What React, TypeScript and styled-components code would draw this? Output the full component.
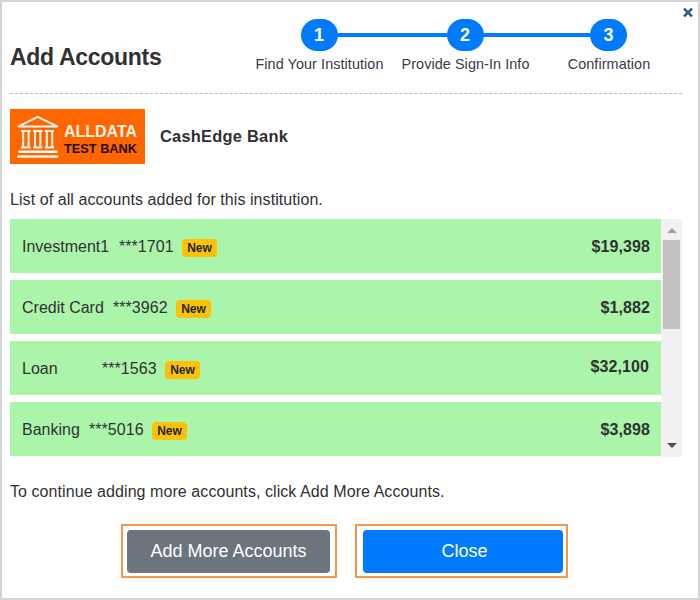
import React from 'react';
import styled, { createGlobalStyle } from 'styled-components';

const GlobalStyle = createGlobalStyle`
  *, *::before, *::after { box-sizing: border-box; }
  body {
    margin: 0;
    background: #fff;
    color: #313131;
    font-family: "Liberation Sans", Arial, sans-serif;
    font-size: 16px;
  }
  p, h1, h2, ul { margin: 0; padding: 0; font-size: inherit; }
`;

const Dialog = styled.main`
  position: relative;
  width: 700px;
  height: 600px;
  padding: 0 16px 0 8px;
  border: 2px solid #d6d6d6;
  background: #fff;
  overflow: hidden;
`;

const Dismiss = styled.button`
  position: absolute;
  top: 6px;
  right: 5px;
  width: 10px;
  height: 9px;
  padding: 0;
  border: 0;
  background: none;
  svg { display: block; }
`;

const Header = styled.header`
  display: flex;
  height: 92px;
  border-bottom: 1px dashed #b9b9b9;
`;

const Title = styled.h1`
  flex: none;
  width: 236px;
  padding-top: 41px;
  line-height: 28px;
  && { font-size: 23px; }
  letter-spacing: -0.3px;
  white-space: nowrap;
`;

const Steps = styled.ol`
  display: grid;
  grid-template-columns: 146px 146px 141px;
  margin: 17px 0 0;
  padding: 0;
  list-style: none;
`;

const Step = styled.li`
  display: flex;
  flex-direction: column;
  align-items: center;
`;

const Track = styled.div<{ $left: boolean; $right: boolean }>`
  display: grid;
  grid-template-columns: 1fr 37px 1fr;
  align-items: center;
  width: 100%;
  &::before, &::after { content: ""; height: 4px; }
  &::before { background: ${(p) => (p.$left ? '#007bff' : 'transparent')}; }
  &::after { background: ${(p) => (p.$right ? '#007bff' : 'transparent')}; }
`;

const StepNumber = styled.span`
  height: 32px;
  border-radius: 16px;
  background: #007bff;
  color: #fff;
  font-size: 18px;
  font-weight: 700;
  line-height: 32px;
  text-align: center;
`;

const StepLabel = styled.span`
  margin-top: 4px;
  padding-left: 1px;
  color: #343c49;
  font-size: 14.4px;
  line-height: 18px;
  letter-spacing: 0.08px;
  white-space: nowrap;
`;

const Institution = styled.section`
  display: flex;
  align-items: center;
  gap: 15px;
  margin-top: 15px;
  height: 55px;
`;

const Logo = styled.svg`
  display: block;
  flex: none;
`;

const LogoText = styled.text`
  font-family: "Liberation Sans", Arial, sans-serif;
  font-weight: 700;
`;

const InstitutionName = styled.h2`
  && { font-size: 16.4px; padding-bottom: 2px; }
  letter-spacing: 0.25px;
  line-height: 20px;
`;

const Note = styled.p<{ $top: number }>`
  margin-top: ${(p) => p.$top}px;
  line-height: 20px;
  letter-spacing: 0.07px;
`;

const Accounts = styled.section`
  display: grid;
  grid-template-columns: 651px 21px;
  height: 238px;
  margin-top: 9px;
`;

const Rows = styled.ul`
  display: flex;
  flex-direction: column;
  gap: 7px;
  list-style: none;
`;

const Row = styled.li`
  display: flex;
  align-items: center;
  height: 54px;
  padding: 2px 11px 0 12px;
  background: #abf5ab;
`;

const AccountName = styled.span<{ $width: number }>`
  width: ${(p) => p.$width}px;
`;

const AccountNumber = styled.span`
  width: 63px;
  letter-spacing: 0.05px;
`;

const Badge = styled.span`
  width: 35px;
  height: 18px;
  margin-top: 2px;
  border-radius: 4px;
  background: #ffc107;
  color: #212529;
  font-size: 12px;
  font-weight: 700;
  line-height: 18px;
  text-align: center;
`;

const Amount = styled.span<{ $raised?: boolean }>`
  margin: ${(p) => (p.$raised ? '-4px 1px 0 auto' : '0 0 0 auto')};
  font-weight: 700;
  letter-spacing: 0.1px;
`;

const Scrollbar = styled.div`
  display: flex;
  flex-direction: column;
  align-items: center;
  background: #f1f1f1;
`;

const Arrow = styled.span<{ $down?: boolean }>`
  width: 0;
  height: 0;
  margin-top: ${(p) => (p.$down ? 'auto' : '9px')};
  margin-bottom: ${(p) => (p.$down ? '9px' : '7px')};
  border: 5px solid transparent;
  border-top: ${(p) => (p.$down ? '5px solid #505050' : '0')};
  border-bottom: ${(p) => (p.$down ? '0' : '5px solid #a3a3a3')};
`;

const Thumb = styled.span`
  width: 17px;
  height: 89px;
  background: #c1c1c1;
`;

const Actions = styled.footer`
  display: flex;
  gap: 18px;
  margin: 22px 0 0 111px;
`;

const Highlight = styled.div<{ $width: number; $left: number }>`
  width: ${(p) => p.$width}px;
  height: 54px;
  padding: 4px 5px 3px ${(p) => p.$left}px;
  border: 2px solid #f79646;
`;

const Button = styled.button<{ $primary?: boolean }>`
  display: block;
  width: ${(p) => (p.$primary ? 200 : 203)}px;
  height: 43px;
  padding: 0;
  border: 0;
  border-radius: 4px;
  background: ${(p) => (p.$primary ? '#007bff' : '#6c757d')};
  color: #fff;
  font: 18px "Liberation Sans", Arial, sans-serif;
  white-space: nowrap;
  ${(p) => (p.$primary ? 'padding-left: 3px;' : '')}
`;

const steps = ['Find Your Institution', 'Provide Sign-In Info', 'Confirmation'];

const accounts = [
  { name: 'Investment1', number: '***1701', amount: '$19,398', width: 97 },
  { name: 'Credit Card', number: '***3962', amount: '$1,882', width: 91 },
  { name: 'Loan', number: '***1563', amount: '$32,100', width: 80, raised: true },
  { name: 'Banking', number: '***5016', amount: '$3,898', width: 67 },
];

function BankLogo() {
  return (
    <Logo width="135" height="55" viewBox="0 0 135 55" role="img" aria-label="AllData Test Bank">
      <rect width="135" height="55" fill="#ff6600" />
      <g fill="none" stroke="#fff8f2" strokeWidth="2">
        <path d="M8.5 17.4 27.8 7.8 47.2 17.4Z" strokeLinejoin="round" />
        <path d="M11 22H20.6M23 22H32.4M34.8 22H44M11 38.6H20.6M23 38.6H32.4M34.8 38.6H44" />
        <path d="M13.2 21V39M18.6 21V39M25 21V39M30.4 21V39M36.8 21V39M42.2 21V39" />
        <path d="M9.5 42.8H46.5M8.3 47.4H47.3" strokeWidth="2.5" strokeLinecap="round" />
      </g>
      <LogoText x="54" y="28.2" fontSize="16" textLength="73" lengthAdjust="spacingAndGlyphs" fill="#fff3ea">
        ALLDATA
      </LogoText>
      <LogoText x="54" y="44.2" fontSize="13.5" textLength="73" lengthAdjust="spacingAndGlyphs" fill="#1f0d00">
        TEST BANK
      </LogoText>
    </Logo>
  );
}

export default function App() {
  return (
    <>
      <GlobalStyle />
      <Dialog>
        <Dismiss aria-label="Close dialog">
          <svg width="10" height="9" viewBox="0 0 10 9">
            <path d="M1 .6 9 8.4M9 .6 1 8.4" stroke="#2f5f8a" strokeWidth="2.6" />
          </svg>
        </Dismiss>
        <Header>
          <Title>Add Accounts</Title>
          <Steps>
            {steps.map((label, i) => (
              <Step key={label}>
                <Track $left={i > 0} $right={i < steps.length - 1}>
                  <StepNumber>{i + 1}</StepNumber>
                </Track>
                <StepLabel>{label}</StepLabel>
              </Step>
            ))}
          </Steps>
        </Header>
        <Institution>
          <BankLogo />
          <InstitutionName>CashEdge Bank</InstitutionName>
        </Institution>
        <Note $top={26}>List of all accounts added for this institution.</Note>
        <Accounts>
          <Rows>
            {accounts.map((a) => (
              <Row key={a.number}>
                <AccountName $width={a.width}>{a.name}</AccountName>
                <AccountNumber>{a.number}</AccountNumber>
                <Badge>New</Badge>
                <Amount $raised={a.raised}>{a.amount}</Amount>
              </Row>
            ))}
          </Rows>
          <Scrollbar>
            <Arrow />
            <Thumb />
            <Arrow $down />
          </Scrollbar>
        </Accounts>
        <Note $top={25}>To continue adding more accounts, click Add More Accounts.</Note>
        <Actions>
          <Highlight $width={216} $left={4}>
            <Button>Add More Accounts</Button>
          </Highlight>
          <Highlight $width={213} $left={6}>
            <Button $primary>Close</Button>
          </Highlight>
        </Actions>
      </Dialog>
    </>
  );
}
